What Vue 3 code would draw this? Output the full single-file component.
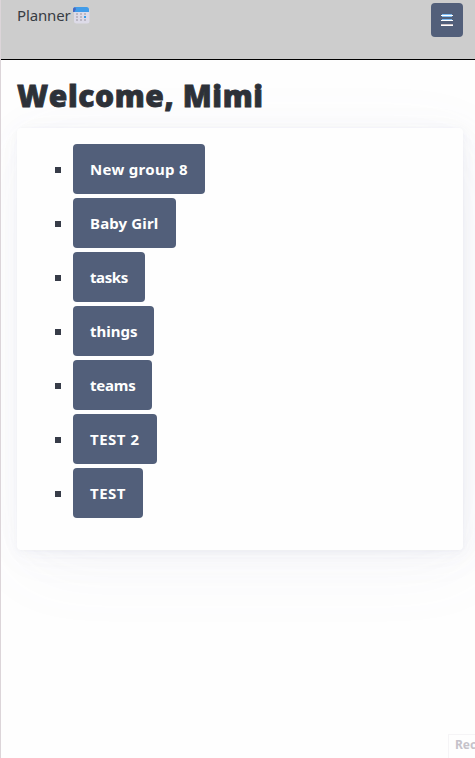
<script setup>
const groups = [
  { name: 'New group 8', width: 132, spacing: 0.3 },
  { name: 'Baby Girl', width: 103, spacing: 0.15 },
  { name: 'tasks', width: 72, spacing: -0.4 },
  { name: 'things', width: 81, spacing: 0 },
  { name: 'teams', width: 79, spacing: -0.2 },
  { name: 'TEST 2', width: 84, spacing: 0.5 },
  { name: 'TEST', width: 70, spacing: 0.5 },
]
</script>

<template>
  <div class="page">
    <header class="topbar">
      <div class="brand">
        <span class="brand-name">Planner</span>
        <svg class="calendar" width="17" height="17" viewBox="0 0 17 17" aria-hidden="true">
          <rect x="1" y="1" width="15.5" height="15.5" rx="2.5" fill="#dddbe8" />
          <path d="M0 5V2.500Q0 0 2.500 0H13.500Q16 0 16 2.500V5Z" fill="#419ce9" />
          <path d="M0 5V2.500Q0 .5 2 .3L3 2L1.500 5Z" fill="#4a67c0" />
          <g fill="#bcb8c4">
            <rect x="3" y="6" width="2" height="2" /><rect x="7" y="6" width="2" height="2" /><rect x="11" y="6" width="2" height="2" />
            <rect x="3" y="9" width="2" height="2" /><rect x="7" y="9" width="2" height="2" />
            <rect x="3" y="12" width="2" height="2" /><rect x="7" y="12" width="2" height="2" /><rect x="11" y="12" width="2" height="2" />
          </g>
          <rect x="11" y="9" width="2" height="2" fill="#399cea" />
        </svg>
      </div>
      <button class="menu" aria-label="Menu">
        <svg width="12" height="12" viewBox="0 0 12 12" shape-rendering="crispEdges">
          <path fill="#7fbdf5" d="M1 0h10v1H1zM1 2h10v1H1zM1 5h10v1H1z" />
          <path fill="#fff" d="M0 1h12v1H0zM0 6h12v1H0zM0 11h12v1H0z" />
          <path fill="#d1c4c8" d="M0 10h12v1H0z" />
        </svg>
      </button>
    </header>
    <main>
      <h1>Welcome, Mimi</h1>
      <article class="card">
        <ul>
          <li v-for="group in groups" :key="group.name">
            <button class="group" :style="{ width: group.width + 'px', letterSpacing: group.spacing + 'px' }">{{ group.name }}</button>
          </li>
        </ul>
      </article>
    </main>
    <div class="recorder">Rec</div>
  </div>
</template>

<style>
body {
  background: #fefefe;
}
</style>

<style scoped>
.page {
  position: relative;
  box-sizing: border-box;
  height: 758px;
  overflow: hidden;
  border-left: 1px solid #dcd5d9;
  background: #fefefe;
  color: #373c44;
  font-family: "Noto Sans", "Open Sans", sans-serif;
  font-size: 15px;
}
.topbar {
  display: flex;
  justify-content: space-between;
  align-items: flex-start;
  box-sizing: border-box;
  height: 60px;
  padding: 3px 12px 0 16px;
  background: #cdcdcd;
  border-bottom: 1px solid #000;
}
.brand {
  display: flex;
  align-items: flex-start;
  gap: 2px;
}
.brand-name {
  width: 54px;
  letter-spacing: -0.15px;
  line-height: 24px;
  white-space: nowrap;
}
.calendar {
  margin-top: 4px;
}
.menu {
  display: flex;
  align-items: center;
  justify-content: center;
  width: 32px;
  height: 34px;
  padding: 0;
  border: 0;
  border-radius: 4px;
  background: #525f7a;
}
main {
  padding: 16px 12px 0 16px;
}
h1 {
  margin: 0 0 12px;
  color: #2d3138;
  font-family: "Open Sans", "Noto Sans", sans-serif;
  font-size: 30px;
  font-weight: 800;
  letter-spacing: 0.6px;
  line-height: 40px;
  white-space: nowrap;
  -webkit-text-stroke: 0.8px #2d3138;
}
.card {
  box-sizing: border-box;
  height: 422px;
  padding: 16px;
  border-radius: 4px;
  background: #fefefe;
  box-shadow:
    0.232px 0.464px 2.784px rgba(129, 145, 181, 0.017),
    0.536px 1.072px 6.432px rgba(129, 145, 181, 0.024),
    1px 2px 12px rgba(129, 145, 181, 0.03),
    1.8px 3.6px 21.6px rgba(129, 145, 181, 0.036),
    3.336px 6.672px 40.032px rgba(129, 145, 181, 0.043),
    8px 16px 80px rgba(129, 145, 181, 0.05),
    0 0 0 0.2px rgba(129, 145, 181, 0.015);
}
ul {
  display: flex;
  flex-direction: column;
  gap: 4px;
  margin: 0;
  padding: 0 0 0 22px;
  list-style: none;
}
li {
  display: flex;
  align-items: center;
  gap: 12px;
}
li::before {
  content: "";
  width: 6px;
  height: 6px;
  margin-top: 2px;
  background: #373c48;
}
.group {
  height: 50px;
  padding: 0 0 0 17px;
  border: 0;
  border-radius: 4px;
  background: #525f7a;
  color: #fff;
  font-family: inherit;
  font-size: 15px;
  font-weight: 700;
  line-height: 24px;
  text-align: left;
  white-space: nowrap;
}
.recorder {
  position: absolute;
  right: 0;
  bottom: 0;
  box-sizing: border-box;
  width: 27px;
  height: 24px;
  padding-left: 6px;
  overflow: hidden;
  border: 1px solid #f5f4f6;
  border-width: 1px 0 0 1px;
  color: #c5c2ca;
  font-size: 12px;
  font-weight: 700;
  line-height: 19px;
}
</style>
